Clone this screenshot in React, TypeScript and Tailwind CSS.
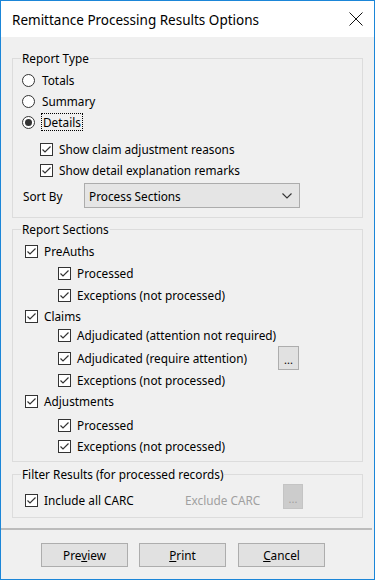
import React from "react";

const Check = ({ checked = true }: { checked?: boolean }) => (
  <span className="w-[13px] h-[13px] shrink-0 border border-[#333333] bg-white flex items-center justify-center">
    {checked && (
      <svg width="11" height="11" viewBox="0 0 11 11">
        <path d="M1.5 5.5 L4 8 L9.5 2.5" fill="none" stroke="#333333" strokeWidth="1.2" />
      </svg>
    )}
  </span>
);

const Radio = ({ checked = false }: { checked?: boolean }) => (
  <span className="w-[13px] h-[13px] shrink-0 rounded-full border border-[#333333] bg-white flex items-center justify-center">
    {checked && <span className="w-[7px] h-[7px] rounded-full bg-[#333333]" />}
  </span>
);

const Row = ({ h, ml, children }: { h: string; ml: string; children: React.ReactNode }) => (
  <div className={`flex items-center ${h} ${ml}`}>{children}</div>
);

export default function App() {
  return (
    <div className="w-[375px] h-[580px] border border-[#1b86d8] bg-[#f0f0f0] flex flex-col font-['Noto_Sans',sans-serif] text-[11.8px] leading-[16px] text-black overflow-hidden">
      {/* Title bar */}
      <div className="h-[36px] shrink-0 bg-white flex items-center pl-[11px] pr-[11px]">
        <span className="text-[13.5px] leading-[18px] mt-[1px]">Remittance Processing Results Options</span>
        <svg className="ml-auto" width="14" height="14" viewBox="0 0 14 14">
          <path d="M0.5 0.5 L13.5 13.5 M13.5 0.5 L0.5 13.5" stroke="#111" strokeWidth="1" />
        </svg>
      </div>

      <div className="flex flex-col px-[11px] pt-[13px]">
        {/* Report Type */}
        <fieldset className="border border-[#dcdcdc] pb-[9px]">
          <legend className="ml-[8px] px-[1px] leading-[16px]">Report Type</legend>
          <div className="flex flex-col pt-[3px] pl-[9px]">
            <Row h="h-[22px]" ml="">
              <Radio />
              <span className="ml-[7px]">Totals</span>
            </Row>
            <Row h="h-[20px]" ml="">
              <Radio />
              <span className="ml-[7px]">Summary</span>
            </Row>
            <Row h="h-[22px]" ml="">
              <Radio checked />
              <span className="ml-[6px] border border-dotted border-black px-[1px] leading-[16px]">Details</span>
            </Row>
            <Row h="h-[22px] mt-[5px]" ml="ml-[18px]">
              <Check />
              <span className="ml-[6px]">Show claim adjustment reasons</span>
            </Row>
            <Row h="h-[20px]" ml="ml-[18px]">
              <Check />
              <span className="ml-[6px]">Show detail explanation remarks</span>
            </Row>
            <div className="flex items-center h-[25px] mt-[3px]">
              <span className="w-[61px] ml-[1px]">Sort By</span>
              <div className="w-[216px] h-[25px] border border-[#acacac] bg-[#e5e5e5] flex items-center pl-[4px] pr-[7px]">
                <span>Process Sections</span>
                <svg className="ml-auto" width="10" height="6" viewBox="0 0 10 6">
                  <path d="M0.5 0.5 L5 5 L9.5 0.5" fill="none" stroke="#333" strokeWidth="1.1" />
                </svg>
              </div>
            </div>
          </div>
        </fieldset>

        {/* Report Sections */}
        <fieldset className="border border-[#dcdcdc] pb-[5px] mt-[3px]">
          <legend className="ml-[8px] px-[1px] leading-[16px]">Report Sections</legend>
          <div className="flex flex-col pt-[3px] pl-[12px]">
            <Row h="h-[22px]" ml="">
              <Check />
              <span className="ml-[6px]">PreAuths</span>
            </Row>
            <Row h="h-[22px]" ml="ml-[33px]">
              <Check />
              <span className="ml-[6px]">Processed</span>
            </Row>
            <Row h="h-[22px]" ml="ml-[33px]">
              <Check />
              <span className="ml-[6px]">Exceptions (not processed)</span>
            </Row>
            <Row h="h-[20px]" ml="">
              <Check />
              <span className="ml-[6px]">Claims</span>
            </Row>
            <Row h="h-[18px]" ml="ml-[33px]">
              <Check />
              <span className="ml-[6px]">Adjudicated (attention not required)</span>
            </Row>
            <Row h="h-[28px]" ml="ml-[33px]">
              <Check />
              <span className="ml-[6px] w-[201px]">Adjudicated (require attention)</span>
              <div className="w-[21px] h-[24px] border border-[#adadad] bg-[#e1e1e1] flex items-end justify-center pb-[4px] text-[11px] leading-[11px]">...</div>
            </Row>
            <Row h="h-[16px]" ml="ml-[33px]">
              <Check />
              <span className="ml-[6px]">Exceptions (not processed)</span>
            </Row>
            <Row h="h-[26px]" ml="">
              <Check />
              <span className="ml-[6px]">Adjustments</span>
            </Row>
            <Row h="h-[22px]" ml="ml-[33px]">
              <Check />
              <span className="ml-[6px]">Processed</span>
            </Row>
            <Row h="h-[20px]" ml="ml-[33px]">
              <Check />
              <span className="ml-[6px]">Exceptions (not processed)</span>
            </Row>
          </div>
        </fieldset>

        {/* Filter Results */}
        <fieldset className="border border-[#dcdcdc] pb-[8px] mt-[4px]">
          <legend className="ml-[8px] px-[1px] leading-[16px]">Filter Results (for processed records)</legend>
          <div className="flex items-start pt-[2px] pl-[12px] h-[27px]">
            <div className="flex items-center h-[16px] mt-[8px] w-[160px]">
              <Check />
              <span className="ml-[6px]">Include all CARC</span>
            </div>
            <div className="flex items-center h-[16px] mt-[8px] w-[98px] text-[#a0a0a0]">Exclude CARC</div>
            <div className="w-[20px] h-[25px] border border-[#c4c4c4] bg-[#cccccc] flex items-end justify-center pb-[4px] text-[11px] leading-[11px] text-[#a0a0a0]">...</div>
          </div>
        </fieldset>
      </div>

      {/* Separator */}
      <div className="h-[2px] bg-[#bcbcbc] mt-[10px] mr-[2px]" />

      {/* Buttons */}
      <div className="flex mt-[13px] pl-[40px]">
        <div className="w-[87px] h-[24px] border border-[#adadad] bg-[#e1e1e1] flex items-center justify-center">
          <span>Pre<span className="underline">v</span>iew</span>
        </div>
        <div className="w-[87px] h-[24px] ml-[11px] border border-[#adadad] bg-[#e1e1e1] flex items-center justify-center">
          <span><span className="underline">P</span>rint</span>
        </div>
        <div className="w-[87px] h-[24px] ml-[12px] border border-[#adadad] bg-[#e1e1e1] flex items-center justify-center">
          <span><span className="underline">C</span>ancel</span>
        </div>
      </div>
    </div>
  );
}
